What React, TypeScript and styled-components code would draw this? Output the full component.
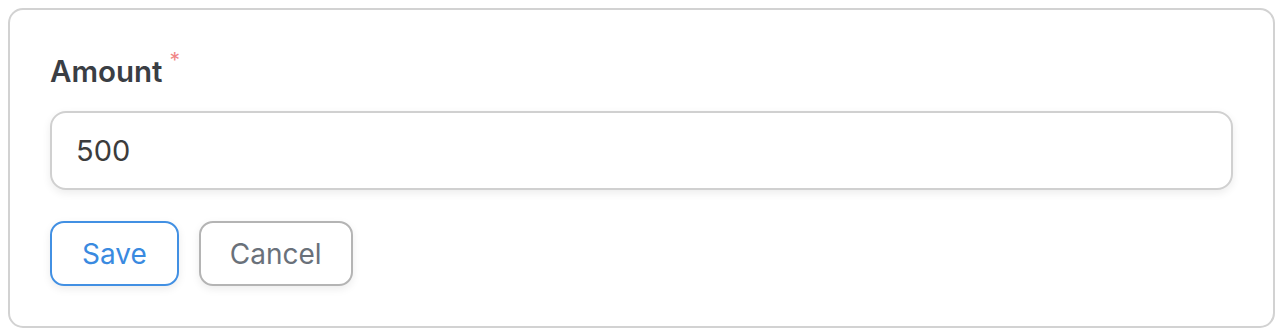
import React from "react";
import styled, { createGlobalStyle } from "styled-components";

const GlobalStyle = createGlobalStyle`
  html, body {
    margin: 0;
    padding: 0;
    background: #ffffff;
  }
  body {
    padding: 8px;
    font-family: Inter, "Liberation Sans", Arial, sans-serif;
    -webkit-font-smoothing: antialiased;
  }
  * { box-sizing: border-box; }
`;

const Card = styled.form`
  display: flex;
  flex-direction: column;
  height: 320px;
  width: 1267px;
  border: 2px solid #d2d2d2;
  border-radius: 15px;
  padding: 40px 40px 40px 40px;
  background: #fff;
`;

const Label = styled.label`
  display: flex;
  align-items: flex-start;
  height: 38px;
  padding-top: 4px;
  line-height: 34px;
  font-size: 29.5px;
  font-weight: 600;
  color: #3a3e44;
`;

const Required = styled.span`
  color: #f08686;
  font-size: 21px;
  font-weight: 400;
  line-height: 21px;
  margin-left: 7px;
  margin-top: -4px;
`;

const Input = styled.input`
  margin-top: 23px;
  height: 79px;
  width: 100%;
  border: 2px solid #d0d0d0;
  border-radius: 16px;
  padding: 0 24px;
  font-family: Inter, "Liberation Sans", Arial, sans-serif;
  font-size: 29px;
  color: #3c3c3c;
  background: #fff;
  box-shadow: 0 3px 8px rgba(0, 0, 0, 0.08);
  outline: none;
`;

const Actions = styled.div`
  display: flex;
  gap: 20px;
  margin-top: 31px;
`;

const Button = styled.button<{ $primary?: boolean }>`
  height: 65px;
  padding: 0 ${(p) => (p.$primary ? 30 : 29)}px;
  border-radius: 14px;
  border: 2px solid ${(p) => (p.$primary ? "#4290e3" : "#b4b4b4")};
  background: #fff;
  color: ${(p) => (p.$primary ? "#3a8ae0" : "#6a717a")};
  font-family: Inter, "Liberation Sans", Arial, sans-serif;
  font-size: 28px;
  font-weight: 400;
  box-shadow: 0 3px 8px rgba(0, 0, 0, 0.08);
  cursor: pointer;
`;

export default function App() {
  return (
    <>
      <GlobalStyle />
      <Card onSubmit={(e) => e.preventDefault()}>
        <Label htmlFor="amount">
          Amount
          <Required>*</Required>
        </Label>
        <Input id="amount" defaultValue="500" />
        <Actions>
          <Button type="submit" $primary>
            Save
          </Button>
          <Button type="button">Cancel</Button>
        </Actions>
      </Card>
    </>
  );
}
